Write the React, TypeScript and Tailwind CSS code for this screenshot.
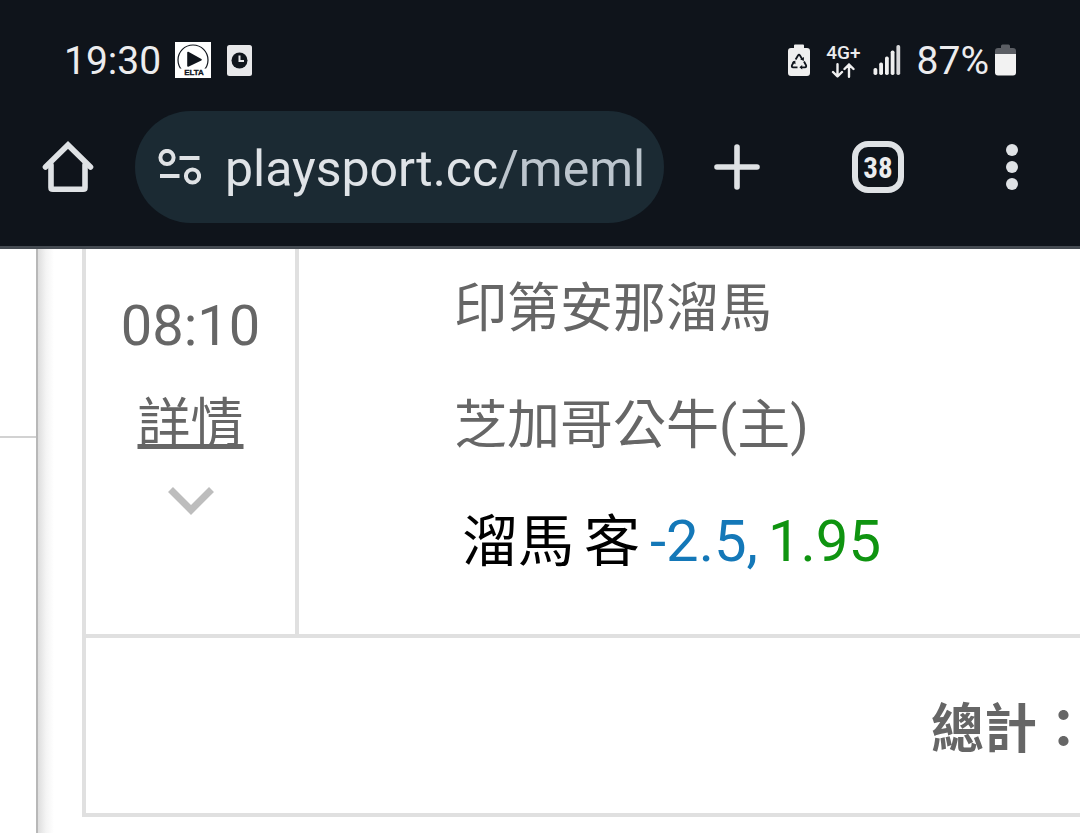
import type { ReactNode } from "react";

function EltaIcon() {
  return (
    <svg viewBox="0 0 36 36" className="h-9 w-9 bg-white" role="img" aria-label="ELTA">
      <circle cx="18" cy="18" r="15" fill="none" stroke="#10151c" strokeWidth="1.2" />
      <path d="M13 10.500 26 17.700 13 24Z" fill="#10151c" stroke="#10151c" strokeWidth="1.6" strokeLinejoin="round" />
      <rect x="5" y="26.500" width="26" height="9.500" fill="#fff" />
      <text x="19" y="33.200" textAnchor="middle" fontSize="8" fontWeight="700" fill="#10151c" stroke="#10151c" strokeWidth="0.3" className="font-['Liberation_Sans',sans-serif]">
        ELTA
      </text>
    </svg>
  );
}

function ClockCardIcon() {
  return (
    <svg viewBox="0 0 25 31" className="h-[31px] w-[25px]" aria-hidden="true">
      <rect width="25" height="31" rx="2.5" fill="#e8e8ea" />
      <circle cx="12.5" cy="15.5" r="8" fill="#10151c" />
      <path d="M12.5 10.5v5.5h4.5" fill="none" stroke="#e8e8ea" strokeWidth="2" />
    </svg>
  );
}

function RecycleBatteryIcon() {
  return (
    <svg viewBox="0 0 22 32" className="h-8 w-[22px]" aria-hidden="true">
      <path d="M7 0.5h8q1 0 1 1V4h3q3 0 3 3v22q0 3-3 3H3q-3 0-3-3V7q0-3 3-3h3V1.500q0-1 1-1Z" fill="#efefef" />
      <g fill="none" stroke="#10151c" strokeWidth="1.8" strokeLinejoin="round">
        <path d="M7.600 15.500 10 11.500q1-1.500 2 0l2.400 4" />
        <path d="M16 17.500l2 3.700q.8 2-1.200 2.200H13" />
        <path d="M9.500 23.400H5.200q-2-.2-1.200-2.200l2-3.700" />
      </g>
      <path d="M12.200 15.200 16 13l-.2 4ZM14.200 21v4.600l-2.800-2.300ZM4 18.200l3.300-1.800.2 3.800Z" fill="#10151c" />
    </svg>
  );
}

function DataArrowsIcon() {
  return (
    <svg viewBox="0 0 24 15" className="h-[15px] w-6" fill="none" stroke="#f0f0f0" strokeWidth="2.4" strokeLinecap="round" strokeLinejoin="round" aria-hidden="true">
      <path d="M6.500 1.200v12M2 9l4.500 4.500L11 9M18 13.800V1.500M13.500 6 18 1.500 22.500 6" />
    </svg>
  );
}

function SignalIcon() {
  return (
    <svg viewBox="0 0 28 30" className="h-[30px] w-7" aria-hidden="true">
      <rect x="0.500" y="23" width="3.800" height="7" rx="1.700" fill="#f0f0f0" />
      <rect x="6.200" y="17.500" width="3.800" height="12.500" rx="1.700" fill="#f0f0f0" />
      <rect x="12" y="11.500" width="3.800" height="18.500" rx="1.700" fill="#f0f0f0" />
      <rect x="17.700" y="5.500" width="3.800" height="24.500" rx="1.700" fill="#f0f0f0" />
      <rect x="23.400" y="0" width="3.800" height="30" rx="1.700" fill="#d8d8da" />
    </svg>
  );
}

function BatteryIcon() {
  return (
    <svg viewBox="0 0 21 32" className="h-8 w-[21px]" aria-hidden="true">
      <path d="M0 10V7q0-3 3-3h3V2q0-1.500 1.500-1.500h6Q15 .5 15 2v2h3q3 0 3 3v3Z" fill="#5b5e64" />
      <path d="M0 10h21v18.500q0 3-3 3H3q-3 0-3-3Z" fill="#f2f2f2" />
    </svg>
  );
}

function HomeIcon() {
  return (
    <svg viewBox="0 0 52 52" className="h-[52px] w-[52px]" fill="none" stroke="#dfe2e5" strokeWidth="5.600" strokeLinecap="round" strokeLinejoin="round" aria-hidden="true">
      <path d="M9 24v22.500q0 1.800 1.800 1.800h30.400q1.800 0 1.800-1.800V24" />
      <path d="M3.500 26 26 4 48.500 26" strokeLinejoin="miter" />
    </svg>
  );
}

function SiteSettingsIcon() {
  return (
    <svg viewBox="0 0 43 36" className="h-9 w-[43px] shrink-0" fill="none" stroke="#dfe2e5" strokeWidth="4" aria-hidden="true">
      <circle cx="9" cy="8.500" r="6.600" />
      <path d="M21.500 9H41.500M2 27H21.500" />
      <circle cx="34.500" cy="27" r="6.600" />
    </svg>
  );
}

function PlusIcon() {
  return (
    <svg viewBox="0 0 46 46" className="h-[46px] w-[46px]" stroke="#dfe2e5" strokeWidth="5.600" strokeLinecap="round" aria-hidden="true">
      <path d="M23 3v40M3 23h40" />
    </svg>
  );
}

function MoreIcon() {
  return (
    <svg viewBox="0 0 12 46" className="h-[46px] w-3" fill="#dfe2e5" aria-hidden="true">
      <circle cx="6" cy="6" r="6" />
      <circle cx="6" cy="23" r="6" />
      <circle cx="6" cy="40" r="6" />
    </svg>
  );
}

function ToolButton({ label, className, children }: { label: string; className: string; children: ReactNode }) {
  return (
    <button type="button" aria-label={label} className={`flex h-28 shrink-0 items-center justify-center ${className}`}>
      {children}
    </button>
  );
}

function StatusBar() {
  return (
    <div className="flex h-14 items-center justify-between px-16 text-[39px] leading-none text-[#ececee]">
      <div className="flex items-center">
        <span className="pt-0.5">19:30</span>
        <span className="ml-3.5 flex items-center gap-4">
          <EltaIcon />
          <ClockCardIcon />
        </span>
      </div>
      <div className="flex items-center">
        <RecycleBatteryIcon />
        <div className="ml-4 flex flex-col items-center gap-0.5 pt-0.5">
          <span className="text-[19px] leading-4 font-medium">4G+</span>
          <DataArrowsIcon />
        </div>
        <span className="ml-3">
          <SignalIcon />
        </span>
        <span className="ml-4 pt-0.5">87%</span>
        <span className="ml-1.5">
          <BatteryIcon />
        </span>
      </div>
    </div>
  );
}

function BrowserBar() {
  return (
    <div className="mt-[23px] flex items-center">
      <ToolButton label="Home" className="w-[135px]">
        <HomeIcon />
      </ToolButton>
      <button type="button" className="flex h-28 min-w-0 flex-1 items-center overflow-hidden rounded-full bg-[#1b2a33] pr-5 pl-[23px] text-left">
        <SiteSettingsIcon />
        <span className="ml-6 pt-1 text-[50px] leading-none whitespace-nowrap text-[#dfe3e7]">
          playsport.cc<span className="text-[#bcc5cd]">/meml</span>
        </span>
      </button>
      <ToolButton label="New tab" className="w-[146px]">
        <PlusIcon />
      </ToolButton>
      <ToolButton label="Tabs" className="w-[136px]">
        <span className="flex h-[52px] w-[52px] items-center justify-center rounded-2xl border-6 border-[#dfe2e5] pt-0.5 font-['Roboto_Condensed',Roboto,sans-serif] text-[29px] leading-none font-bold text-[#ececee]">
          38
        </span>
      </ToolButton>
      <ToolButton label="Menu" className="w-[134px] pr-0.5">
        <MoreIcon />
      </ToolButton>
    </div>
  );
}

export default function App() {
  return (
    <div className="flex min-h-screen flex-col overflow-hidden bg-white font-[Roboto,'Noto_Sans_CJK_TC',sans-serif]">
      <header className="border-b-3 border-[#454b52] bg-[#0f141b] pt-8 pb-[23px]">
        <StatusBar />
        <BrowserBar />
      </header>
      <main className="flex flex-1 text-[#666]">
        <aside className="w-9 shrink-0">
          <div className="h-[189px] border-b-2 border-[#d2d2d2]" />
        </aside>
        <div className="w-[18px] shrink-0 border-l-2 border-[#b8b8b8] bg-linear-to-r from-[#dedede] via-[#f4f4f4] to-white" />
        <div className="-mr-24 ml-7 flex-1">
          <table lang="zh-Hant" className="w-full border-separate border-spacing-0 border-b-4 border-l-4 border-[#e0e0e0]">
            <tbody>
              <tr>
                <td className="w-[213px] border-r-4 border-b-4 border-[#e0e0e0] p-0 text-center align-top">
                  <div className="pt-7 text-[56px] leading-[98px]">08:10</div>
                  <a href="#detail" className="block text-[53px] leading-[98px] underline decoration-[5px] underline-offset-[2px] [text-decoration-skip-ink:none]">
                    詳情
                  </a>
                  <svg viewBox="0 0 46 28" className="mx-auto mt-3.5 h-7 w-[46px]" fill="none" stroke="#bdbdbd" strokeWidth="7" aria-hidden="true">
                    <path d="M2.500 2.500 23 23 43.500 2.500" />
                  </svg>
                </td>
                <td className="border-b-4 border-[#e0e0e0] pt-0.5 pr-0 pb-9 pl-[155px] align-top text-[53px] leading-[117px] whitespace-nowrap">
                  <div>印第安那溜馬</div>
                  <div>芝加哥公牛(主)</div>
                  <div className="flex items-baseline gap-2.5 pl-2 text-[56px] leading-[112px] text-black">
                    <span>溜馬</span>
                    <span>客</span>
                    <span className="text-[58px] text-[#1478b8]">-2.5,</span>
                    <span className="text-[58px] text-[#0f9410]">1.95</span>
                  </div>
                </td>
              </tr>
              <tr>
                <td colSpan={2} className="h-[175px] pt-2 pr-[86px] pb-0 pl-0 text-right text-[53px] leading-[80px] font-bold whitespace-nowrap">
                  總計：
                </td>
              </tr>
            </tbody>
          </table>
        </div>
      </main>
    </div>
  );
}
